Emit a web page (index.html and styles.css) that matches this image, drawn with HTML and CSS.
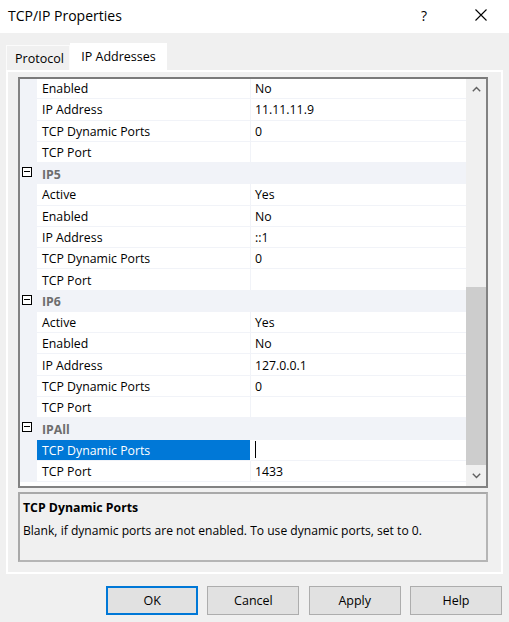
FILE: index.html
```html
<!DOCTYPE html>
<html lang="en">
<head>
<meta charset="utf-8">
<title>TCP/IP Properties</title>
<link rel="stylesheet" href="styles.css">
</head>
<body>
<div class="titlebar">
  <div class="title">TCP/IP Properties</div>
  <div class="help">?</div>
  <div class="close"><svg width="12" height="12" viewBox="0 0 12 12"><path d="M0.5 0.5 L11.5 11.5 M11.5 0.5 L0.5 11.5" stroke="#000" stroke-width="1.1" fill="none"/></svg></div>
</div>
<div class="dialog-body">
  <div class="tabstrip">
    <div class="tab">Protocol</div>
    <div class="tab active">IP Addresses</div>
  </div>
  <div class="panel">
    <div class="grid">
      <div class="rows">
        <div class="list">
          <div class="row"><div class="margin"></div><div class="name">Enabled</div><div class="value">No</div></div>
          <div class="row"><div class="margin"></div><div class="name">IP Address</div><div class="value">11.11.11.9</div></div>
          <div class="row"><div class="margin"></div><div class="name">TCP Dynamic Ports</div><div class="value">0</div></div>
          <div class="row"><div class="margin"></div><div class="name">TCP Port</div><div class="value"></div></div>
          <div class="row cat"><div class="margin"><span class="minus"></span></div><div class="cat-name">IP5</div></div>
          <div class="row"><div class="margin"></div><div class="name">Active</div><div class="value">Yes</div></div>
          <div class="row"><div class="margin"></div><div class="name">Enabled</div><div class="value">No</div></div>
          <div class="row"><div class="margin"></div><div class="name">IP Address</div><div class="value">::1</div></div>
          <div class="row"><div class="margin"></div><div class="name">TCP Dynamic Ports</div><div class="value">0</div></div>
          <div class="row"><div class="margin"></div><div class="name">TCP Port</div><div class="value"></div></div>
          <div class="row cat"><div class="margin"><span class="minus"></span></div><div class="cat-name">IP6</div></div>
          <div class="row"><div class="margin"></div><div class="name">Active</div><div class="value">Yes</div></div>
          <div class="row"><div class="margin"></div><div class="name">Enabled</div><div class="value">No</div></div>
          <div class="row"><div class="margin"></div><div class="name">IP Address</div><div class="value">127.0.0.1</div></div>
          <div class="row"><div class="margin"></div><div class="name">TCP Dynamic Ports</div><div class="value">0</div></div>
          <div class="row"><div class="margin"></div><div class="name">TCP Port</div><div class="value"></div></div>
          <div class="row cat"><div class="margin"><span class="minus"></span></div><div class="cat-name">IPAll</div></div>
          <div class="row selected"><div class="margin"></div><div class="name">TCP Dynamic Ports</div><div class="value"><span class="caret"></span></div></div>
          <div class="row"><div class="margin"></div><div class="name">TCP Port</div><div class="value">1433</div></div>
        </div>
      </div>
      <div class="scrollbar">
        <div class="sb-btn up"><svg width="9" height="6" viewBox="0 0 9 6"><path d="M0.8 5.2 L4.5 1.5 L8.2 5.2" stroke="#606060" stroke-width="1.4" fill="none"/></svg></div>
        <div class="sb-track"><div class="sb-thumb"></div></div>
        <div class="sb-btn down"><svg width="9" height="6" viewBox="0 0 9 6"><path d="M0.8 0.8 L4.5 4.5 L8.2 0.8" stroke="#606060" stroke-width="1.4" fill="none"/></svg></div>
      </div>
    </div>
    <div class="desc">
      <div class="desc-title">TCP Dynamic Ports</div>
      <div class="desc-text">Blank, if dynamic ports are not enabled. To use dynamic ports, set to 0.</div>
    </div>
  </div>
  <div class="buttons">
    <button class="btn default">OK</button>
    <button class="btn">Cancel</button>
    <button class="btn">Apply</button>
    <button class="btn">Help</button>
  </div>
</div>
</body>
</html>
```
FILE: styles.css
```css
* { box-sizing: border-box; }
html, body { margin: 0; padding: 0; }
body {
  width: 509px;
  height: 622px;
  background: #f0f0f0;
  font-family: "Open Sans", "Noto Sans", sans-serif;
  color: #000;
  overflow: hidden;
}
.titlebar {
  height: 33px;
  background: #fff;
  display: flex;
  align-items: center;
}
.title {
  padding-left: 8px;
  font-size: 14px;
  flex: 1;
  margin-top: -2px;
}
.help {
  font-size: 14px;
  width: 20px;
  margin-right: 34px;
  margin-top: -3px;
}
.close {
  width: 12px;
  height: 12px;
  margin-right: 22px;
  margin-top: -3px;
  display: flex;
}
.dialog-body {
  padding: 10px 6px 0 6px;
}
.tabstrip {
  display: flex;
  align-items: flex-end;
  height: 27px;
  position: relative;
  z-index: 1;
}
.tab {
  height: 25px;
  width: 64px;
  font-size: 12.5px;
  display: flex;
  align-items: center;
  justify-content: center;
  background: #f0f0f0;
  border: 1px solid #fbfbfb;
  border-bottom: none;
  padding-top: 1px;
  padding-left: 3px;
}
.tab.active {
  width: 97px;
  height: 29px;
  margin-bottom: -2px;
  background: #fff;
  border-color: #fff;
  padding-bottom: 4px;
  padding-left: 0;
}
.panel {
  height: 504px;
  border: 2px solid #fff;
  padding: 5px 13px 10px 10px;
  display: flex;
  flex-direction: column;
  gap: 4px;
}
.grid {
  height: 411px;
  border: 2px solid #828282;
  border-top-color: #7a7a7a;
  display: flex;
  background: #fff;
}
.rows {
  flex: 1;
  overflow: hidden;
}
.list {
  margin-top: -1px;
}
.row {
  height: 21.28px;
  display: grid;
  grid-template-columns: 17px 214px 1fr;
  font-size: 12.3px;
}
.row .margin {
  background: #f1f3f8;
  position: relative;
}
.row .name {
  border-bottom: 1px solid #f1f3f8;
  border-right: 1px solid #f1f3f8;
  padding-left: 5px;
  padding-top: 1px;
  display: flex;
  align-items: center;
  white-space: nowrap;
}
.row .value {
  border-bottom: 1px solid #f1f3f8;
  padding-left: 4px;
  padding-top: 1px;
  display: flex;
  align-items: center;
  white-space: nowrap;
}
.row.selected .name {
  background: #0078d7;
  color: #fff;
  border-right-color: #fff;
}
.caret {
  display: block;
  width: 1px;
  height: 17px;
  background: #000;
  margin-top: -1px;
}
.row.cat {
  background: #f1f3f8;
}
.cat-name {
  grid-column: 2 / 4;
  font-weight: bold;
  color: #6d6d6d;
  padding-left: 5px;
  padding-top: 1px;
  display: flex;
  align-items: center;
}
.minus {
  position: absolute;
  left: 2px;
  top: 4px;
  width: 10px;
  height: 10px;
  border: 1px solid #000;
  background: #fff;
}
.minus::after {
  content: "";
  position: absolute;
  left: 1px;
  right: 1px;
  top: 3px;
  height: 1px;
  background: #000;
}
.scrollbar {
  width: 20px;
  background: #f0f0f0;
  display: flex;
  flex-direction: column;
}
.sb-btn {
  height: 20px;
  display: flex;
  align-items: center;
  justify-content: center;
}
.sb-btn.down { height: 21px; }
.sb-track {
  flex: 1;
}
.sb-thumb {
  margin-top: 188px;
  height: 178px;
  background: #cdcdcd;
}
.desc {
  height: 70px;
  border: 2px solid #a9a9a9;
  border-right-color: #b5b5b5;
  border-bottom-color: #b5b5b5;
  padding: 4px 3px;
  background: #f0f0f0;
}
.desc-title {
  font-weight: bold;
  font-size: 12.3px;
  height: 19px;
  line-height: 19px;
}
.desc-text {
  font-size: 12.1px;
  margin-top: 5px;
  line-height: 18px;
  white-space: nowrap;
}
.buttons {
  margin-top: 12px;
  display: flex;
  justify-content: flex-end;
  gap: 9.3px;
  padding-right: 1px;
}
.btn {
  width: 92px;
  height: 29px;
  font-family: "Open Sans", "Noto Sans", sans-serif;
  font-size: 12.5px;
  color: #000;
  background: #e1e1e1;
  border: 1px solid #adadad;
  padding: 0;
}
.btn.default {
  border-color: #0078d7;
  box-shadow: inset 0 0 0 1px #0078d7;
}
```
